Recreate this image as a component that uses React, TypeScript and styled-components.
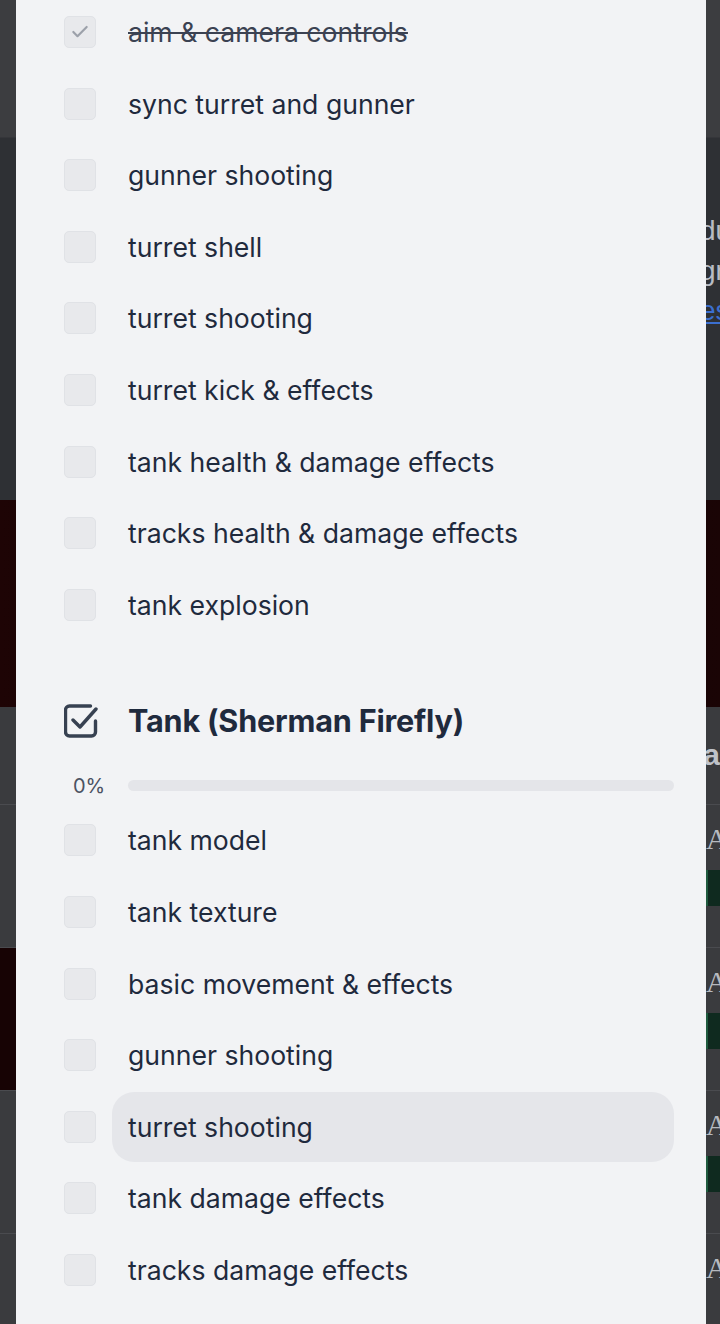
import React from "react";
import styled, { createGlobalStyle } from "styled-components";

const Global = createGlobalStyle`
  html, body { margin: 0; padding: 0; }
  body { font-family: Inter, "Noto Sans", sans-serif; background: #3a3b3e; overflow: hidden; }
  * { box-sizing: border-box; }
`;

const Backdrop = styled.div`
  width: 720px;
  height: 1324px;
  display: flex;
  flex-direction: column;
  background: #3a3b3e;
  overflow: hidden;
  & > * { flex: none; }
`;

const TopBar = styled.div`
  height: 138px;
  background: #3c3d40;
  border-bottom: 1px solid #35363a;
`;

const Hero = styled.div`
  height: 362px;
  background: #2e3034;
  display: flex;
  flex-direction: column;
  align-items: flex-end;
  padding-top: 73px;
  font-family: "Liberation Sans", sans-serif;
  font-size: 28px;
  line-height: 40px;
  color: #cfd2d8;
`;

const HeroLine = styled.div<{ $link?: boolean }>`
  width: 20px;
  overflow: hidden;
  white-space: nowrap;
  color: ${(p) => (p.$link ? "#3b6fd0" : "#b8bcc4")};
  text-decoration: ${(p) => (p.$link ? "underline" : "none")};
`;

const Picture = styled.div<{ $h: number }>`
  height: ${(p) => p.$h}px;
  background: linear-gradient(90deg, #1e0405 0%, #120203 50%, #1a0405 100%);
`;

const Section = styled.div`
  height: 98px;
  background: #3a3b3e;
  border-bottom: 1px solid #4a4b4f;
  display: flex;
  justify-content: flex-end;
  padding-top: 31px;
  font-family: "Liberation Sans", sans-serif;
  font-weight: 700;
  font-size: 30px;
  line-height: 34px;
  color: #bfc2c8;
`;

const Card = styled.div`
  height: 143px;
  display: grid;
  grid-template-columns: 16px 1fr 14px;
  border-bottom: 1px solid #4a4b4f;
  background: #3a3b3e;
`;

const Thumb = styled.div<{ $dark?: boolean }>`
  background: ${(p) => (p.$dark ? "#170304" : "#3a3b3e")};
`;

const CardSide = styled.div`
  display: flex;
  flex-direction: column;
  padding-top: 17px;
  gap: 14px;
  font-family: "Liberation Serif", serif;
  font-size: 30px;
  line-height: 34px;
  color: #b6b9bf;
  overflow: hidden;
`;

const GreenBox = styled.div`
  height: 36px;
  background: #0f2a1f;
  border-left: 2px solid #1f5a3e;
`;

const Sheet = styled.div`
  position: fixed;
  top: 0;
  left: 16px;
  width: 690px;
  height: 1324px;
  background: #f2f3f5;
  overflow: hidden;
  padding: 0 32px 0 48px;
`;

const List = styled.ul<{ $offset?: number }>`
  list-style: none;
  margin: ${(p) => p.$offset ?? 0}px 0 0;
  padding: 0;
  display: flex;
  flex-direction: column;
`;

const Row = styled.li`
  height: 71.6px;
  display: flex;
  align-items: center;
  gap: 16px;
`;

const Box = styled.span`
  flex: none;
  width: 32px;
  height: 32px;
  border-radius: 5px;
  background: #e8e9ec;
  border: 1px solid #e0e2e6;
  display: flex;
  align-items: center;
  justify-content: center;
  color: #9ca1aa;
`;

const Label = styled.span<{ $done?: boolean; $hover?: boolean }>`
  flex: 1;
  height: 70px;
  display: flex;
  align-items: center;
  padding-left: 16px;
  border-radius: 22px;
  background: ${(p) => (p.$hover ? "#e5e6ea" : "transparent")};
  font-size: 26.6px;
  color: ${(p) => (p.$done ? "#3b4252" : "#1f2a3d")};
  text-decoration: ${(p) => (p.$done ? "line-through" : "none")};
  text-decoration-thickness: 2px;
  white-space: nowrap;
`;

const Header = styled.div`
  margin-top: 55px;
  height: 50px;
  display: flex;
  align-items: center;
  gap: 30px;
`;

const Title = styled.h2`
  margin: 0;
  font-size: 30.6px;
  font-weight: 700;
  color: #1f2a3d;
  letter-spacing: -0.2px;
`;

const Progress = styled.div`
  margin-top: 28px;
  height: 24px;
  display: flex;
  align-items: center;
`;

const Percent = styled.span`
  width: 64px;
  padding-left: 9px;
  font-size: 20px;
  color: #4b5262;
`;

const Track = styled.div`
  flex: 1;
  height: 11px;
  border-radius: 6px;
  background: #e4e5e9;
`;

const CheckMark = () => (
  <svg width="20" height="20" viewBox="0 0 24 24" fill="none" stroke="currentColor" strokeWidth="2.6" strokeLinecap="round" strokeLinejoin="round">
    <path d="M20 6 9 17l-5-5" />
  </svg>
);

const SquareCheck = () => (
  <svg width="34" height="34" viewBox="0 0 34 34" fill="none" stroke="#374151" strokeWidth="3.4" strokeLinecap="round" strokeLinejoin="round">
    <path d="M31.5 17v11a4 4 0 0 1-4 4h-22a4 4 0 0 1-4-4V6a4 4 0 0 1 4-4h21" />
    <path d="M9 16l7 7L32 5" />
  </svg>
);

const first = [
  "sync turret and gunner",
  "gunner shooting",
  "turret shell",
  "turret shooting",
  "turret kick & effects",
  "tank health & damage effects",
  "tracks health & damage effects",
  "tank explosion",
];

const second = [
  "tank model",
  "tank texture",
  "basic movement & effects",
  "gunner shooting",
  "turret shooting",
  "tank damage effects",
  "tracks damage effects",
];

export default function App() {
  return (
    <>
      <Global />
      <Backdrop>
        <TopBar />
        <Hero>
          <HeroLine>du</HeroLine>
          <HeroLine>gr</HeroLine>
          <HeroLine $link>es</HeroLine>
        </Hero>
        <Picture $h={207} />
        <Section>Da</Section>
        {[0, 1, 2, 3].map((i) => (
          <Card key={i}>
            <Thumb $dark={i === 1} />
            <div />
            <CardSide>
              <span>Al</span>
              {i < 3 && <GreenBox />}
            </CardSide>
          </Card>
        ))}
      </Backdrop>
      <Sheet>
        <List $offset={-3.8}>
          <Row>
            <Box>
              <CheckMark />
            </Box>
            <Label $done>aim &amp; camera controls</Label>
          </Row>
          {first.map((t) => (
            <Row key={t}>
              <Box />
              <Label>{t}</Label>
            </Row>
          ))}
        </List>
        <Header>
          <SquareCheck />
          <Title>Tank (Sherman Firefly)</Title>
        </Header>
        <Progress>
          <Percent>0%</Percent>
          <Track />
        </Progress>
        <List $offset={7}>
          {second.map((t, i) => (
            <Row key={t + i}>
              <Box />
              <Label $hover={i === 4}>{t}</Label>
            </Row>
          ))}
        </List>
      </Sheet>
    </>
  );
}
